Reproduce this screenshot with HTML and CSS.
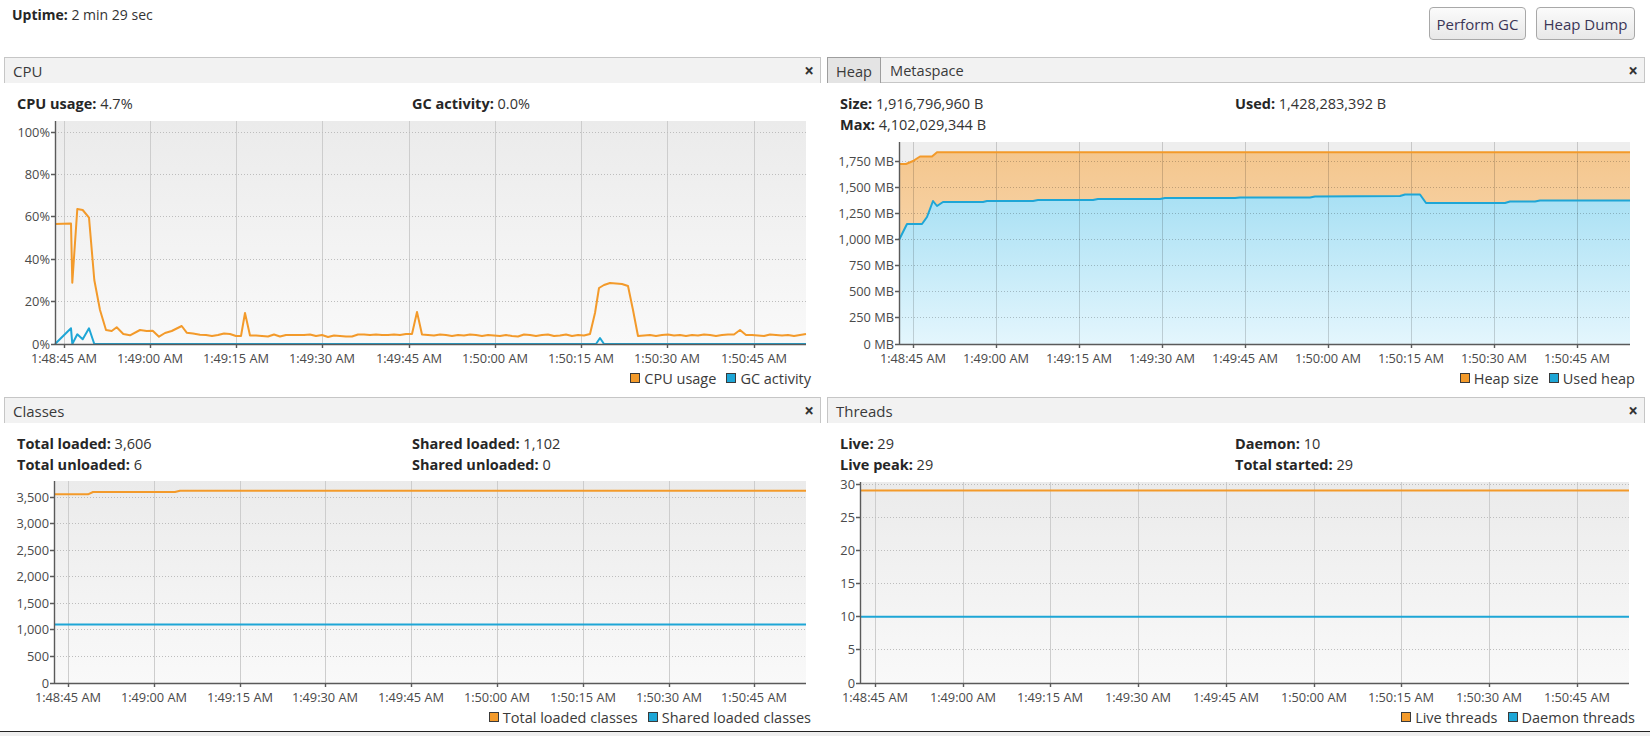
FILE: index.html
```html
<!DOCTYPE html>
<html lang="en">
<head>
<meta charset="utf-8">
<title>Monitor</title>
<link rel="stylesheet" href="styles.css">
</head>
<body>
<div class="app">
  <header class="topbar">
    <div class="uptime"><b>Uptime:</b> 2 min 29 sec</div>
    <div class="actions">
      <button class="btn btn-gc">Perform GC</button>
      <button class="btn btn-dump">Heap Dump</button>
    </div>
  </header>

  <main class="grid">
    <!-- CPU -->
    <section class="panel">
      <div class="panel-head"><span class="title">CPU</span><span class="close">×</span></div>
      <div class="stats">
        <div><b>CPU usage:</b> 4.7%</div>
        <div><b>GC activity:</b> 0.0%</div>
      </div>
      <svg class="chart" width="817" height="252" viewBox="4 114 817 252">
        <defs>
          <linearGradient id="bgCpu" x1="0" y1="0" x2="0" y2="1">
            <stop offset="0" stop-color="#ebebeb"/><stop offset="1" stop-color="#f9f9f9"/>
          </linearGradient>
        </defs>
        <rect x="55" y="121" width="751" height="223" fill="url(#bgCpu)"/>
        <path class="vgrid" d="M64.5 121V344M150.5 121V344M236.5 121V344M322.5 121V344M409.5 121V344M495.5 121V344M581.5 121V344M667.5 121V344M754.5 121V344"/>
        <path class="hgrid" d="M55 132.5H806M55 174.5H806M55 216.5H806M55 259.5H806M55 301.5H806"/>
        <polyline class="ln-orange" points="55,224 71,223.5 72.3,282.7 77.3,209 82.7,210 89,217.7 94.3,280 100,310 106,330 111.7,331 116.7,327.3 123.3,334 130,335.3 140,330 146.7,331 152.7,330.7 159,336.7 165,333 171.7,331 181.7,326 186.7,332.7 193,333.5 200,334.7 206,335 212,336 218,335 224,333.5 230,334 236,336 241,336 245,313 250,335.5 256,335.5 262,336 268,336.5 274,334.5 280,336.5 286,335 292,335 298,335 304,335 310,334.5 316,336 322,335 328,337 334,335.5 340,336 346,336.5 352,336.5 358,334.5 364,334.5 370,335 376,334.5 382,335 388,335 394,334.5 400,335 406,334 412,334 417,312 422,334.5 428,335 434,335.5 440,334.5 446,335 452,336 458,335 464,335.5 470,334.5 476,335 482,336 488,335 494,335.5 500,336 506,335 512,336 518,336.5 524,334.5 530,335 536,336 542,335 548,334.5 554,336 560,335.5 566,334.5 572,336 578,335 584,335.5 590,334 595,313 599,288 604,285 610,283 616,283.5 622,284 628,286 633,310 638,336 644,335.5 650,335 656,336 662,335 668,334.5 674,335.5 680,335 686,336 692,335 698,335.5 704,334.5 710,335 716,336 722,335 728,334.5 734,334.5 740,330 746,335 752,335 758,335.5 764,336 770,334.5 776,335 782,335.5 788,335 794,336 800,335 806,334"/>
        <polyline class="ln-blue" points="55,344 71,328.3 72.3,344 77.3,334.3 82.7,339.3 89,328.3 94.3,344 596,344 600,338 604,344 806,344"/>
        <path class="axis" d="M55.5 121V344.5H806M51 132.5H55M51 174.5H55M51 216.5H55M51 259.5H55M51 301.5H55M51 344.5H55M64.5 344V348M150.5 344V348M236.5 344V348M322.5 344V348M409.5 344V348M495.5 344V348M581.5 344V348M667.5 344V348M754.5 344V348"/>
        <g class="ylab">
          <text x="50" y="137">100%</text><text x="50" y="179">80%</text><text x="50" y="221">60%</text>
          <text x="50" y="264">40%</text><text x="50" y="306">20%</text><text x="50" y="348.5">0%</text>
        </g>
        <g class="xlab">
          <text x="64" y="362.5">1:48:45 AM</text><text x="150" y="362.5">1:49:00 AM</text><text x="236" y="362.5">1:49:15 AM</text>
          <text x="322" y="362.5">1:49:30 AM</text><text x="409" y="362.5">1:49:45 AM</text><text x="495" y="362.5">1:50:00 AM</text>
          <text x="581" y="362.5">1:50:15 AM</text><text x="667" y="362.5">1:50:30 AM</text><text x="754" y="362.5">1:50:45 AM</text>
        </g>
      </svg>
      <div class="legend">
        <span class="legend-item"><i class="swatch sw-orange"></i>CPU usage</span>
        <span class="legend-item"><i class="swatch sw-blue"></i>GC activity</span>
      </div>
    </section>

    <!-- Heap -->
    <section class="panel">
      <div class="panel-head tabbed">
        <div class="tabs"><span class="tab active">Heap</span><span class="tab">Metaspace</span></div>
        <span class="close">×</span>
      </div>
      <div class="stats">
        <div><b>Size:</b> 1,916,796,960 B</div>
        <div><b>Used:</b> 1,428,283,392 B</div>
        <div><b>Max:</b> 4,102,029,344 B</div>
      </div>
      <svg class="chart" width="818" height="231" viewBox="827 135 818 231">
        <defs>
          <linearGradient id="fillOrange" gradientUnits="userSpaceOnUse" x1="0" y1="150" x2="0" y2="344">
            <stop offset="0" stop-color="#f4c68d"/><stop offset="1" stop-color="#fbe2c4"/>
          </linearGradient>
          <linearGradient id="fillBlue" gradientUnits="userSpaceOnUse" x1="0" y1="195" x2="0" y2="344">
            <stop offset="0" stop-color="#a8e0f4"/><stop offset="1" stop-color="#e4f6fd"/>
          </linearGradient>
        </defs>
        <rect x="899" y="142" width="731" height="202" fill="#eeeeee"/>
        <polygon fill="url(#fillOrange)" points="899,164 906,164 913,161 920,156.5 932,156.5 937,152.3 1630,152.3 1630,344 899,344"/>
        <polygon fill="url(#fillBlue)" points="899,240 907,224 922,224 927,217 933,201 937,206 943,202 983,202 987,201 1033,201 1038,200 1093,200 1098,199 1160,199 1165,198 1235,198 1240,197.5 1310,197.5 1315,196.5 1400,196 1405,194.5 1420,194.5 1426,203 1505,203 1510,201.5 1535,201.5 1540,200.5 1630,200.5 1630,344 899,344"/>
        <path class="vgrid over" d="M913.5 142V344M996.5 142V344M1079.5 142V344M1162.5 142V344M1245.5 142V344M1328.5 142V344M1411.5 142V344M1494.5 142V344M1577.5 142V344"/>
        <path class="hgrid over" d="M899 161.5H1630M899 187.5H1630M899 213.5H1630M899 239.5H1630M899 265.5H1630M899 291.5H1630M899 317.5H1630"/>
        <polyline class="ln-orange" points="899,164 906,164 913,161 920,156.5 932,156.5 937,152.3 1630,152.3"/>
        <polyline class="ln-blue" points="899,240 907,224 922,224 927,217 933,201 937,206 943,202 983,202 987,201 1033,201 1038,200 1093,200 1098,199 1160,199 1165,198 1235,198 1240,197.5 1310,197.5 1315,196.5 1400,196 1405,194.5 1420,194.5 1426,203 1505,203 1510,201.5 1535,201.5 1540,200.5 1630,200.5"/>
        <path class="axis" d="M899.5 142V344.5H1630M895 161.5H899M895 187.5H899M895 213.5H899M895 239.5H899M895 265.5H899M895 291.5H899M895 317.5H899M895 344.5H899M913.5 344V348M996.5 344V348M1079.5 344V348M1162.5 344V348M1245.5 344V348M1328.5 344V348M1411.5 344V348M1494.5 344V348M1577.5 344V348"/>
        <g class="ylab">
          <text x="894" y="166">1,750 MB</text><text x="894" y="192">1,500 MB</text><text x="894" y="218">1,250 MB</text>
          <text x="894" y="244">1,000 MB</text><text x="894" y="270">750 MB</text><text x="894" y="296">500 MB</text>
          <text x="894" y="322">250 MB</text><text x="894" y="348.5">0 MB</text>
        </g>
        <g class="xlab">
          <text x="913" y="362.5">1:48:45 AM</text><text x="996" y="362.5">1:49:00 AM</text><text x="1079" y="362.5">1:49:15 AM</text>
          <text x="1162" y="362.5">1:49:30 AM</text><text x="1245" y="362.5">1:49:45 AM</text><text x="1328" y="362.5">1:50:00 AM</text>
          <text x="1411" y="362.5">1:50:15 AM</text><text x="1494" y="362.5">1:50:30 AM</text><text x="1577" y="362.5">1:50:45 AM</text>
        </g>
      </svg>
      <div class="legend">
        <span class="legend-item"><i class="swatch sw-orange"></i>Heap size</span>
        <span class="legend-item"><i class="swatch sw-blue"></i>Used heap</span>
      </div>
    </section>

    <!-- Classes -->
    <section class="panel">
      <div class="panel-head"><span class="title">Classes</span><span class="close">×</span></div>
      <div class="stats">
        <div><b>Total loaded:</b> 3,606</div>
        <div><b>Shared loaded:</b> 1,102</div>
        <div><b>Total unloaded:</b> 6</div>
        <div><b>Shared unloaded:</b> 0</div>
      </div>
      <svg class="chart" width="817" height="230" viewBox="4 475 817 230">
        <defs>
          <linearGradient id="bgCls" x1="0" y1="0" x2="0" y2="1">
            <stop offset="0" stop-color="#ebebeb"/><stop offset="1" stop-color="#f9f9f9"/>
          </linearGradient>
        </defs>
        <rect x="54" y="481" width="752" height="202" fill="url(#bgCls)"/>
        <path class="vgrid" d="M68.5 481V683M154.5 481V683M240.5 481V683M325.5 481V683M411.5 481V683M497.5 481V683M583.5 481V683M669.5 481V683M754.5 481V683"/>
        <path class="hgrid" d="M54 497.5H806M54 523.5H806M54 550.5H806M54 576.5H806M54 603.5H806M54 629.5H806M54 656.5H806"/>
        <polyline class="ln-orange" points="54,494.3 88,494.3 93,492 175,492 180,490.7 806,490.7"/>
        <polyline class="ln-blue" points="54,624.4 806,624.4"/>
        <path class="axis" d="M54.5 481V683.5H806M50 497.5H54M50 523.5H54M50 550.5H54M50 576.5H54M50 603.5H54M50 629.5H54M50 656.5H54M50 683.5H54M68.5 683V687M154.5 683V687M240.5 683V687M325.5 683V687M411.5 683V687M497.5 683V687M583.5 683V687M669.5 683V687M754.5 683V687"/>
        <g class="ylab">
          <text x="49" y="502">3,500</text><text x="49" y="528">3,000</text><text x="49" y="555">2,500</text>
          <text x="49" y="581">2,000</text><text x="49" y="608">1,500</text><text x="49" y="634">1,000</text>
          <text x="49" y="661">500</text><text x="49" y="687.5">0</text>
        </g>
        <g class="xlab">
          <text x="68" y="701.5">1:48:45 AM</text><text x="154" y="701.5">1:49:00 AM</text><text x="240" y="701.5">1:49:15 AM</text>
          <text x="325" y="701.5">1:49:30 AM</text><text x="411" y="701.5">1:49:45 AM</text><text x="497" y="701.5">1:50:00 AM</text>
          <text x="583" y="701.5">1:50:15 AM</text><text x="669" y="701.5">1:50:30 AM</text><text x="754" y="701.5">1:50:45 AM</text>
        </g>
      </svg>
      <div class="legend">
        <span class="legend-item"><i class="swatch sw-orange"></i>Total loaded classes</span>
        <span class="legend-item"><i class="swatch sw-blue"></i>Shared loaded classes</span>
      </div>
    </section>

    <!-- Threads -->
    <section class="panel">
      <div class="panel-head"><span class="title">Threads</span><span class="close">×</span></div>
      <div class="stats">
        <div><b>Live:</b> 29</div>
        <div><b>Daemon:</b> 10</div>
        <div><b>Live peak:</b> 29</div>
        <div><b>Total started:</b> 29</div>
      </div>
      <svg class="chart" width="818" height="230" viewBox="827 475 818 230">
        <defs>
          <linearGradient id="bgThr" x1="0" y1="0" x2="0" y2="1">
            <stop offset="0" stop-color="#ebebeb"/><stop offset="1" stop-color="#f9f9f9"/>
          </linearGradient>
        </defs>
        <rect x="860" y="482" width="769" height="201" fill="url(#bgThr)"/>
        <path class="vgrid" d="M875.5 482V683M963.5 482V683M1050.5 482V683M1138.5 482V683M1226.5 482V683M1314.5 482V683M1401.5 482V683M1489.5 482V683M1577.5 482V683"/>
        <path class="hgrid" d="M860 484.5H1629M860 517.5H1629M860 550.5H1629M860 583.5H1629M860 616.5H1629M860 649.5H1629"/>
        <polyline class="ln-orange" points="860,490.6 1629,490.6"/>
        <polyline class="ln-blue" points="860,616.7 1629,616.7"/>
        <path class="axis" d="M860.5 482V683.5H1629M856 484.5H860M856 517.5H860M856 550.5H860M856 583.5H860M856 616.5H860M856 649.5H860M856 683.5H860M875.5 683V687M963.5 683V687M1050.5 683V687M1138.5 683V687M1226.5 683V687M1314.5 683V687M1401.5 683V687M1489.5 683V687M1577.5 683V687"/>
        <g class="ylab">
          <text x="855" y="489">30</text><text x="855" y="522">25</text><text x="855" y="555">20</text>
          <text x="855" y="588">15</text><text x="855" y="621">10</text><text x="855" y="654">5</text>
          <text x="855" y="687.5">0</text>
        </g>
        <g class="xlab">
          <text x="875" y="701.5">1:48:45 AM</text><text x="963" y="701.5">1:49:00 AM</text><text x="1050" y="701.5">1:49:15 AM</text>
          <text x="1138" y="701.5">1:49:30 AM</text><text x="1226" y="701.5">1:49:45 AM</text><text x="1314" y="701.5">1:50:00 AM</text>
          <text x="1401" y="701.5">1:50:15 AM</text><text x="1489" y="701.5">1:50:30 AM</text><text x="1577" y="701.5">1:50:45 AM</text>
        </g>
      </svg>
      <div class="legend">
        <span class="legend-item"><i class="swatch sw-orange"></i>Live threads</span>
        <span class="legend-item"><i class="swatch sw-blue"></i>Daemon threads</span>
      </div>
    </section>
  </main>
  <div class="statusbar"></div>
</div>
</body>
</html>
```

FILE: styles.css
```css
* { box-sizing: border-box; }
html, body { margin: 0; padding: 0; }
body {
  width: 1650px;
  height: 736px;
  overflow: hidden;
  background: #ffffff;
  font-family: "Open Sans", "DejaVu Sans", sans-serif;
  font-size: 14px;
  color: #333333;
}
.app { height: 736px; display: flex; flex-direction: column; }

.topbar {
  height: 57px;
  flex: none;
  display: flex;
  justify-content: space-between;
  align-items: flex-start;
  padding: 0 15px 0 12px;
}
.uptime { margin-top: 5px; line-height: 20px; font-size: 14px; }
.uptime b, .stats b { font-weight: 700; color: #262626; }
.actions { display: flex; gap: 10px; margin-top: 7px; }
.btn {
  height: 33px;
  padding: 0;
  border: 1px solid #a8a8a8;
  border-radius: 4px;
  background: linear-gradient(#fbfbfb, #e8e8e8);
  font-family: "Open Sans", "DejaVu Sans", sans-serif;
  font-size: 15px;
  color: #3b3656;
}
.btn-gc { width: 97px; }
.btn-dump { width: 99px; }

.grid {
  flex: none;
  display: grid;
  grid-template-columns: 817px 818px;
  grid-template-rows: 336px 334px;
  column-gap: 6px;
  row-gap: 4px;
  padding-left: 4px;
}
.panel { display: flex; flex-direction: column; min-width: 0; }
.panel-head {
  height: 26px;
  flex: none;
  display: flex;
  align-items: center;
  justify-content: space-between;
  background: #f2f2f2;
  border: 1px solid #c6c6c6;
  border-bottom: none;
  padding: 0 6px 0 8px;
  font-size: 15px;
  color: #3a3a3a;
}
.panel-head.tabbed { padding-left: 0; border-left: none; border-bottom: 1px solid #c6c6c6; font-size: 14.6px; }
.tabs { display: flex; align-items: stretch; height: 100%; }
.tab { display: flex; align-items: center; padding: 0 9px; }
.tab.active {
  background: #e4e4e4;
  border: 1px solid #9e9e9e;
  border-bottom: none;
  margin-top: -1px;
  height: 26px;
  padding: 0 8px;
}
.close { font-size: 17px; font-weight: 700; color: #333; line-height: 1; }

.stats {
  flex: none;
  display: grid;
  grid-template-columns: 395px auto;
  padding: 10px 0 0 13px;
  line-height: 21px;
  font-size: 14.5px;
}

.chart { display: block; flex: none; }
.vgrid { stroke: #cdcdcd; stroke-width: 1; fill: none; }
.vgrid.over { stroke: rgba(0, 0, 0, 0.16); }
.hgrid { stroke: #bdbdbd; stroke-width: 1; stroke-dasharray: 1 2; fill: none; }
.hgrid.over { stroke: rgba(0, 0, 0, 0.22); }
.axis { stroke: #5a5a5a; stroke-width: 1.4; fill: none; }
.ln-orange { fill: none; stroke: #f39a2a; stroke-width: 2; stroke-linejoin: round; }
.ln-blue { fill: none; stroke: #1ea6d6; stroke-width: 2; stroke-linejoin: round; }
.ylab text {
  font-family: "Open Sans", "DejaVu Sans", sans-serif;
  font-size: 12.8px;
  fill: #4a4a4a;
  text-anchor: end;
}
.xlab text {
  font-family: "Open Sans", "DejaVu Sans", sans-serif;
  font-size: 12.8px;
  fill: #4a4a4a;
  text-anchor: middle;
}

.legend {
  height: 24px;
  flex: none;
  display: flex;
  justify-content: flex-end;
  align-items: center;
  gap: 10px;
  padding-right: 10px;
  font-size: 14.5px;
  color: #3a3a3a;
}
.legend-item { display: flex; align-items: center; gap: 4px; }
.swatch { width: 10px; height: 10px; border: 1px solid #3a3a3a; display: inline-block; }
.sw-orange { background: #f39a2a; }
.sw-blue { background: #1ea6d6; }

.statusbar {
  flex: 1;
  background: #efefef;
  border-top: 1px solid #222222;
}
```
